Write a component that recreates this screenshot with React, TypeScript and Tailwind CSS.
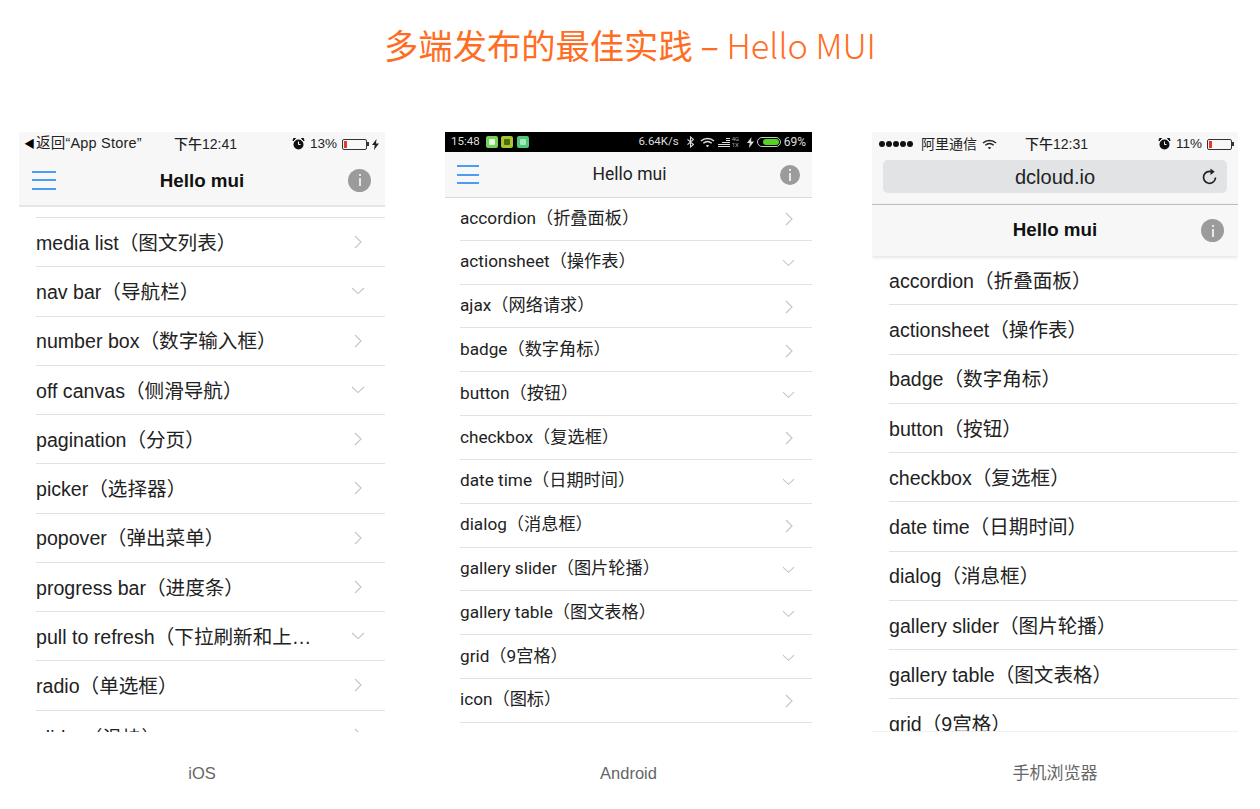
import React from 'react'

type Item = [string, boolean?]

const iosItems: Item[] = [
  ['media list（图文列表）'],
  ['nav bar（导航栏）', true],
  ['number box（数字输入框）'],
  ['off canvas（侧滑导航）', true],
  ['pagination（分页）'],
  ['picker（选择器）'],
  ['popover（弹出菜单）'],
  ['progress bar（进度条）'],
  ['pull to refresh（下拉刷新和上…', true],
  ['radio（单选框）'],
  ['slider（滑块）'],
]

const androidItems: Item[] = [
  ['accordion（折叠面板）'],
  ['actionsheet（操作表）', true],
  ['ajax（网络请求）'],
  ['badge（数字角标）'],
  ['button（按钮）', true],
  ['checkbox（复选框）'],
  ['date time（日期时间）', true],
  ['dialog（消息框）'],
  ['gallery slider（图片轮播）', true],
  ['gallery table（图文表格）', true],
  ['grid（9宫格）', true],
  ['icon（图标）'],
]

const browserItems = [
  'accordion（折叠面板）',
  'actionsheet（操作表）',
  'badge（数字角标）',
  'button（按钮）',
  'checkbox（复选框）',
  'date time（日期时间）',
  'dialog（消息框）',
  'gallery slider（图片轮播）',
  'gallery table（图文表格）',
  'grid（9宫格）',
]

function Chevron({ down }: { down?: boolean }) {
  return down ? (
    <svg width="14" height="8" viewBox="0 0 14 8" fill="none" stroke="#c4c4c4" strokeWidth="1.1">
      <path d="M1 1l6 5.600L13 1" />
    </svg>
  ) : (
    <svg width="8" height="14" viewBox="0 0 8 14" fill="none" stroke="#c4c4c4" strokeWidth="1.1">
      <path d="M1 1l6 6-6 6" />
    </svg>
  )
}

function Menu({ width }: { width: string }) {
  return (
    <div className={`flex flex-col gap-[6.5px] ${width}`}>
      <div className="h-[2px] bg-[#4a9df5]" />
      <div className="h-[2px] bg-[#4a9df5]" />
      <div className="h-[2px] bg-[#4a9df5]" />
    </div>
  )
}

function InfoDot({ size }: { size: string }) {
  return (
    <div className={`flex items-center justify-center rounded-full bg-[#9b9b9b] ${size}`}>
      <svg width="4" height="12" viewBox="0 0 4 12" fill="#e8e8e8">
        <rect x="1" y="0" width="2" height="2" />
        <rect x="1" y="4" width="2" height="8" />
      </svg>
    </div>
  )
}

function Alarm() {
  return (
    <svg width="13" height="12" viewBox="0 0 13 12" fill="#111">
      <circle cx="6.500" cy="6.500" r="5" />
      <path d="M1 3l2.500-2.500L1.500.5zM12 3L9.500.5l2 0z" stroke="#111" />
      <path d="M6.500 3.500v3h2" stroke="#fff" fill="none" />
    </svg>
  )
}

function Battery({ fill }: { fill: string }) {
  return (
    <div className="flex items-center">
      <div className="flex h-[11px] w-[25px] rounded-[2px] border border-[#333] p-px">
        <div className={`h-full bg-[#e8372c] ${fill}`} />
      </div>
      <div className="h-[4px] w-[2px] bg-[#333]" />
    </div>
  )
}

function Wifi({ color }: { color: string }) {
  return (
    <svg width="15" height="11" viewBox="0 0 15 11" fill="none" stroke={color} strokeWidth="1.5">
      <path d="M1 4c3.700-3.300 9.300-3.300 13 0M3.300 6.300c2.500-2.100 5.900-2.100 8.400 0" />
      <path d="M5.700 8.500c1-.8 2.600-.8 3.600 0L7.500 10.300z" fill={color} stroke="none" />
    </svg>
  )
}

function Bolt({ color }: { color: string }) {
  return (
    <svg width="7" height="11" viewBox="0 0 7 11" fill={color}>
      <path d="M4.500 0L0 6h2.700L2 11l5-6.500H4z" />
    </svg>
  )
}

function Bluetooth() {
  return (
    <svg width="7" height="12" viewBox="0 0 7 12" fill="none" stroke="#ddd" strokeWidth="1.1">
      <path d="M.5 3.300l6 5.200L3.500 11V1l3 2.500-6 5.200" />
    </svg>
  )
}

function Signal() {
  return (
    <svg width="12" height="9" viewBox="0 0 12 9" fill="#ddd">
      <path d="M8 0h4v1H8zM8 2h4v1H8zM4 4h8v1H4zM0 6h12v1H0zM0 8h12v1H0z" />
    </svg>
  )
}

function AppIcon({ color, glyph }: { color: string; glyph: string }) {
  return (
    <div className={`flex h-[12px] w-[12px] items-center justify-center rounded-[2px] ${color}`}>
      <div className={`h-[6px] w-[6px] rounded-[1px] ${glyph}`} />
    </div>
  )
}

function IosPhone() {
  return (
    <div className="flex h-[600px] w-[366px] flex-col overflow-hidden bg-white">
      <div className="flex h-[75px] shrink-0 flex-col border-b-2 border-[#e6e6e6] bg-[#f7f7f7]">
        <div className="flex h-[23px] items-center pl-[5px] pr-[6px] pt-[1px] text-[14px] text-[#222]">
          <span className="text-[11px] text-black">◀</span>
          <span className="ml-px w-[123px] whitespace-nowrap text-[14.5px] tracking-[0.2px]">返回“App Store”</span>
          <span className="ml-[15px] font-medium">下午12:41</span>
          <div className="ml-auto flex items-center gap-[5px]">
            <Alarm />
            <span className="text-[13.5px]">13%</span>
            <div className="flex items-center gap-[3px]">
              <Battery fill="w-[3px]" />
              <Bolt color="#222" />
            </div>
          </div>
        </div>
        <div className="flex flex-1 items-center justify-between pl-[13px] pr-[14px]">
          <Menu width="w-[24px]" />
          <span className="pt-[2px] text-[18.8px] font-bold text-[#111]">Hello mui</span>
          <InfoDot size="h-[23px] w-[23px]" />
        </div>
      </div>
      <div className="ml-[17px] h-[11px] shrink-0 border-b border-[#e2e2e2]" />
      <ul className="pl-[17px]">
        {iosItems.map(([label, down]) => (
          <li key={label} className="group flex h-[49.25px] items-center border-b border-[#e2e2e2] pr-[20px]">
            <span className="whitespace-nowrap pt-[3px] text-[19.6px] text-[#222] group-last:translate-y-[3px]">{label}</span>
            <div className="ml-auto flex w-[14px] justify-center">
              <Chevron down={down} />
            </div>
          </li>
        ))}
      </ul>
    </div>
  )
}

function AndroidPhone() {
  return (
    <div className="flex h-[600px] w-[367px] flex-col overflow-hidden bg-white font-['Roboto','Noto_Sans_CJK_SC',sans-serif]">
      <div className="flex h-[20px] shrink-0 items-center bg-black px-[6px] text-[11.5px] text-[#ddd]">
        <span>15:48</span>
        <div className="ml-[6px] flex gap-[3.5px]">
          <AppIcon color="bg-[#72d45c]" glyph="bg-[#e6f7e0]" />
          <AppIcon color="bg-[#a4c82c]" glyph="bg-[#4f6a10]" />
          <AppIcon color="bg-[#50c878]" glyph="bg-[#a8e8c0]" />
        </div>
        <div className="ml-auto flex items-center">
          <span className="text-[11.5px]">6.64K/s</span>
          <div className="ml-[8px]">
            <Bluetooth />
          </div>
          <div className="ml-[6px]">
            <Wifi color="#ddd" />
          </div>
          <div className="ml-[3px]">
            <Signal />
          </div>
          <span className="ml-[2px] w-[9px] text-[6px] leading-[6px] text-[#aaa]">4G 1X</span>
          <div className="ml-[6px]">
            <Bolt color="#ddd" />
          </div>
          <div className="ml-[3px] flex h-[10px] w-[24px] rounded-full border border-[#ccc] p-px">
            <div className="ml-auto h-full w-[16px] rounded-full bg-[#55d321]" />
          </div>
          <span className="ml-[3px] text-[12px]">69%</span>
        </div>
      </div>
      <div className="flex h-[46px] shrink-0 items-center justify-between border-b border-[#d9d9d9] bg-[#f7f7f7] px-[12px]">
        <Menu width="w-[22px]" />
        <span className="text-[17.5px] text-[#222]">Hello mui</span>
        <InfoDot size="h-[20px] w-[20px]" />
      </div>
      <ul className="-mt-px pl-[15px]">
        {androidItems.map(([label, down]) => (
          <li key={label} className="flex h-[43.82px] items-center border-b border-[#e2e2e2] pr-[17px]">
            <span className="text-[17.2px] text-[#222]">{label}</span>
            <div className="ml-auto flex w-[13px] justify-center pt-[2px]">
              <Chevron down={down} />
            </div>
          </li>
        ))}
      </ul>
    </div>
  )
}

function BrowserPhone() {
  return (
    <div className="flex h-[600px] w-[366px] flex-col overflow-hidden border-b border-[#f0f0f0] bg-white">
      <div className="h-[73px] shrink-0 border-b border-[#c4c4c4] bg-[#f7f7f7]">
        <div className="flex h-[24px] items-center pl-[7px] pr-[4px] text-[#222]">
          <div className="flex gap-px">
            <div className="h-[6px] w-[6px] rounded-full bg-[#111]" />
            <div className="h-[6px] w-[6px] rounded-full bg-[#111]" />
            <div className="h-[6px] w-[6px] rounded-full bg-[#111]" />
            <div className="h-[6px] w-[6px] rounded-full bg-[#111]" />
            <div className="h-[6px] w-[6px] rounded-full bg-[#111]" />
          </div>
          <span className="ml-[8px] text-[14px]">阿里通信</span>
          <div className="ml-[5px]">
            <Wifi color="#222" />
          </div>
          <span className="ml-[28px] text-[14px] font-medium">下午12:31</span>
          <div className="ml-auto flex items-center gap-[5px]">
            <Alarm />
            <span className="text-[13.5px]">11%</span>
            <Battery fill="w-[3px]" />
          </div>
        </div>
        <div className="mx-[11px] mt-[4px] flex h-[33px] items-center rounded-[5px] bg-[#e2e3e5] pl-[132px] pr-[8px] text-[20px] text-[#222]">
          dcloud.io
          <svg className="ml-auto" width="18" height="18" viewBox="0 0 18 18" fill="none" stroke="#222" strokeWidth="1.7">
            <path d="M14.500 9.500a6 6 0 1 1-3.500-5.600" />
            <path d="M9.500 0.500l4.200 3.300-4.200 3.200z" fill="#222" stroke="none" />
          </svg>
        </div>
      </div>
      <div className="grid h-[51px] shrink-0 grid-cols-[1fr_auto_1fr] items-center bg-[#f7f7f7] px-[14px] shadow-[0_1px_4px_rgba(0,0,0,0.15)]">
        <span />
        <span className="text-[18.8px] font-bold text-[#111]">Hello mui</span>
        <div className="justify-self-end">
          <InfoDot size="h-[23px] w-[23px]" />
        </div>
      </div>
      <ul className="pl-[17px]">
        {browserItems.map((label) => (
          <li key={label} className="flex h-[49.25px] items-center border-b border-[#e2e2e2]">
            <span className="whitespace-nowrap pt-[3px] text-[19.6px] text-[#222]">{label}</span>
          </li>
        ))}
      </ul>
    </div>
  )
}

export default function App() {
  return (
    <div className="h-[809px] w-[1260px] overflow-hidden bg-white font-['Liberation_Sans','Noto_Sans_CJK_SC',sans-serif]">
      <h1 className="flex h-[132px] justify-center whitespace-pre pt-[20px] font-['Noto_Sans_CJK_SC',sans-serif] text-[34.3px] font-normal leading-[48px] text-[#ff6d25]">
        多端发布的最佳实践 – <span className="font-light">Hello MUI</span>
      </h1>
      <div className="flex gap-[60px] pl-[19px]">
        <div className="flex flex-col items-center">
          <IosPhone />
          <span className="mt-[29px] text-[16.5px] text-[#666]">iOS</span>
        </div>
        <div className="flex flex-col items-center">
          <AndroidPhone />
          <span className="mt-[29px] text-[16.5px] text-[#666]">Android</span>
        </div>
        <div className="flex flex-col items-center">
          <BrowserPhone />
          <span className="mt-[29px] text-[17px] text-[#666]">手机浏览器</span>
        </div>
      </div>
    </div>
  )
}
